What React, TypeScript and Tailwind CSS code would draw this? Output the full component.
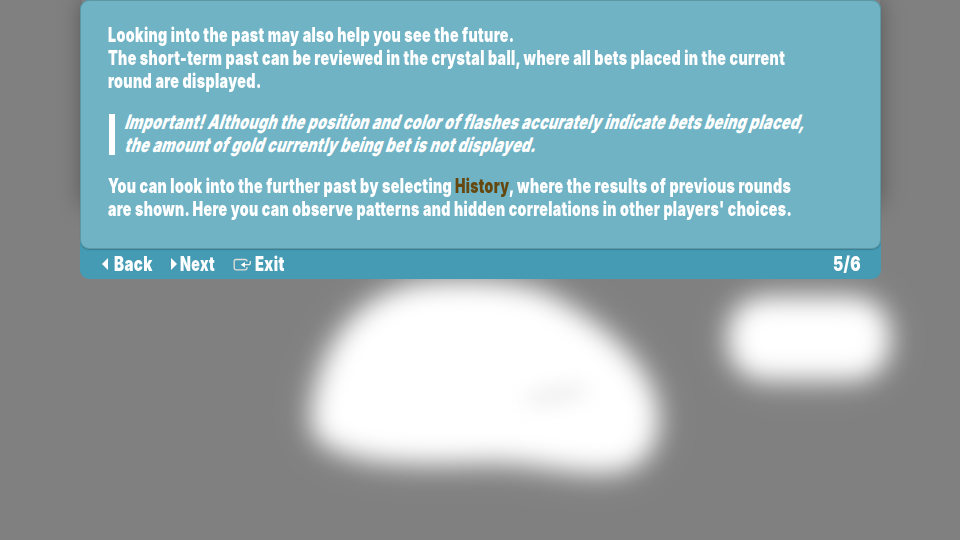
import { useLayoutEffect, useRef, useState, type ReactNode } from "react";

// Condenses its text horizontally so that it fills exactly `width` pixels.
function Fit({ width, slant = 0, children, className = "" }: { width: number; slant?: number; children: ReactNode; className?: string }) {
  const ref = useRef<HTMLSpanElement>(null);
  const [scale, setScale] = useState(0.8);
  useLayoutEffect(() => {
    if (ref.current) setScale(width / (ref.current.offsetWidth - 0.5));
  }, [width]);
  return (
    <span className="block h-full shrink-0" style={{ width }}>
      <span
        ref={ref}
        className={"inline-block origin-left whitespace-pre " + className}
        style={{ transform: `skewX(${-slant}deg) scaleX(${scale})` }}
      >
        {children}
      </span>
    </span>
  );
}

const CLOUD =
  "M313 416C319 352 355 290 430 284C490 280 534 286 559 302C610 331 655 372 657 416C658 450 640 470 606 471C565 472 532 460 486 461C438 463 380 464 346 452C323 445 311 436 313 416Z";

function Backdrop() {
  return (
    <svg className="absolute inset-0 h-full w-full" viewBox="0 0 960 540">
      <defs>
        <filter id="soft" x="-30%" y="-60%" width="160%" height="220%" colorInterpolationFilters="sRGB">
          <feGaussianBlur stdDeviation="13" />
        </filter>
        <filter id="halo" x="-60%" y="-100%" width="220%" height="300%" colorInterpolationFilters="sRGB">
          <feGaussianBlur stdDeviation="22" />
        </filter>
        <filter id="faint" x="-50%" y="-100%" width="200%" height="300%" colorInterpolationFilters="sRGB">
          <feGaussianBlur stdDeviation="10" />
        </filter>
      </defs>
      <path d={CLOUD} fill="white" opacity="0.3" filter="url(#halo)" />
      <path d={CLOUD} fill="white" filter="url(#soft)" />
      <rect x="730" y="299" width="158" height="79" rx="40" fill="white" opacity="0.35" filter="url(#halo)" />
      <rect x="730" y="299" width="158" height="79" rx="34" fill="white" filter="url(#soft)" />
      <ellipse cx="556" cy="395" rx="34" ry="8" fill="#ededed" transform="rotate(-10 556 395)" filter="url(#faint)" />
    </svg>
  );
}

export default function App() {
  return (
    <div className="relative h-[540px] w-[960px] overflow-hidden bg-[#808080] font-['Inter','Liberation_Sans',sans-serif] text-[20px] font-black leading-[23px] tracking-[0.5px] text-white">
      <Backdrop />
      <div className="absolute left-[82px] top-0 h-[205px] w-[798px] shadow-[0_0_22px_rgba(0,0,0,0.35)]" />
      <main className="relative ml-[80px] h-[279px] w-[801px] rounded-[9px] bg-[#459bb3]">
        <section className="flex h-[249px] flex-col rounded-[9px] border border-[#5e96a4] bg-[#6fb3c5] pl-[27px] pt-[23px] shadow-[0_1px_1px_rgba(20,80,100,0.35)]">
          <div className="flex flex-col">
            <div className="h-[23px]"><Fit width={406}>Looking into the past may also help you see the future.</Fit></div>
            <div className="h-[23px]"><Fit width={677}>The short-term past can be reviewed in the crystal ball, where all bets placed in the current</Fit></div>
            <div className="h-[23px]"><Fit width={153}>round are displayed.</Fit></div>
          </div>
          <div className="mt-[18px] flex gap-[11px]">
            <div className="ml-px mt-[3px] h-[41px] w-[6px] bg-white" />
            <div className="flex flex-col">
              <div className="h-[23px]"><Fit slant={18} width={680}>Important! Although the position and color of flashes accurately indicate bets being placed,</Fit></div>
              <div className="h-[23px]"><Fit slant={18} width={411}>the amount of gold currently being bet is not displayed.</Fit></div>
            </div>
          </div>
          <div className="mt-[18px] flex flex-col">
            <div className="flex h-[23px]">
              <Fit width={347}>{"You can look into the further past by selecting "}</Fit>
              <Fit width={54} className="text-[#65480f]">History</Fit>
              <Fit width={282}>, where the results of previous rounds</Fit>
            </div>
            <div className="h-[23px]"><Fit width={684}>are shown. Here you can observe patterns and hidden correlations in other players' choices.</Fit></div>
          </div>
        </section>
        <footer className="flex h-[30px] items-center pl-[21px] pr-[20px]">
          <svg className="h-[12px] w-[7px]" viewBox="0 0 7 12"><path d="M7 0v12L1 6z" fill="white" /></svg>
          <div className="ml-[6px] h-[23px]"><Fit width={38}>Back</Fit></div>
          <svg className="ml-[19px] h-[12px] w-[6px]" viewBox="0 0 6 12"><path d="M0 0v12L6 6z" fill="white" /></svg>
          <div className="ml-[3px] h-[23px]"><Fit width={35}>Next</Fit></div>
          <svg className="ml-[18px] h-[13px] w-[19px]" viewBox="0 0 19 13" fill="none">
            <path d="M14 3.5Q14 1.5 12 1.5H3Q1.2 1.5 1.2 3.2V10Q1.2 11.8 3 11.8H12Q14 11.8 14 9.8V9" stroke="#e5dfda" strokeWidth="1.3" />
            <path d="M17.3 3V5Q17.3 6.7 15.7 6.7H10" stroke="#f1edeb" strokeWidth="1.3" />
            <path d="M7.7 6.7L12 4V9.4Z" fill="white" />
          </svg>
          <div className="ml-[3px] h-[23px]"><Fit width={29}>Exit</Fit></div>
          <div className="ml-auto h-[23px]"><Fit width={28}>5/6</Fit></div>
        </footer>
      </main>
    </div>
  );
}
